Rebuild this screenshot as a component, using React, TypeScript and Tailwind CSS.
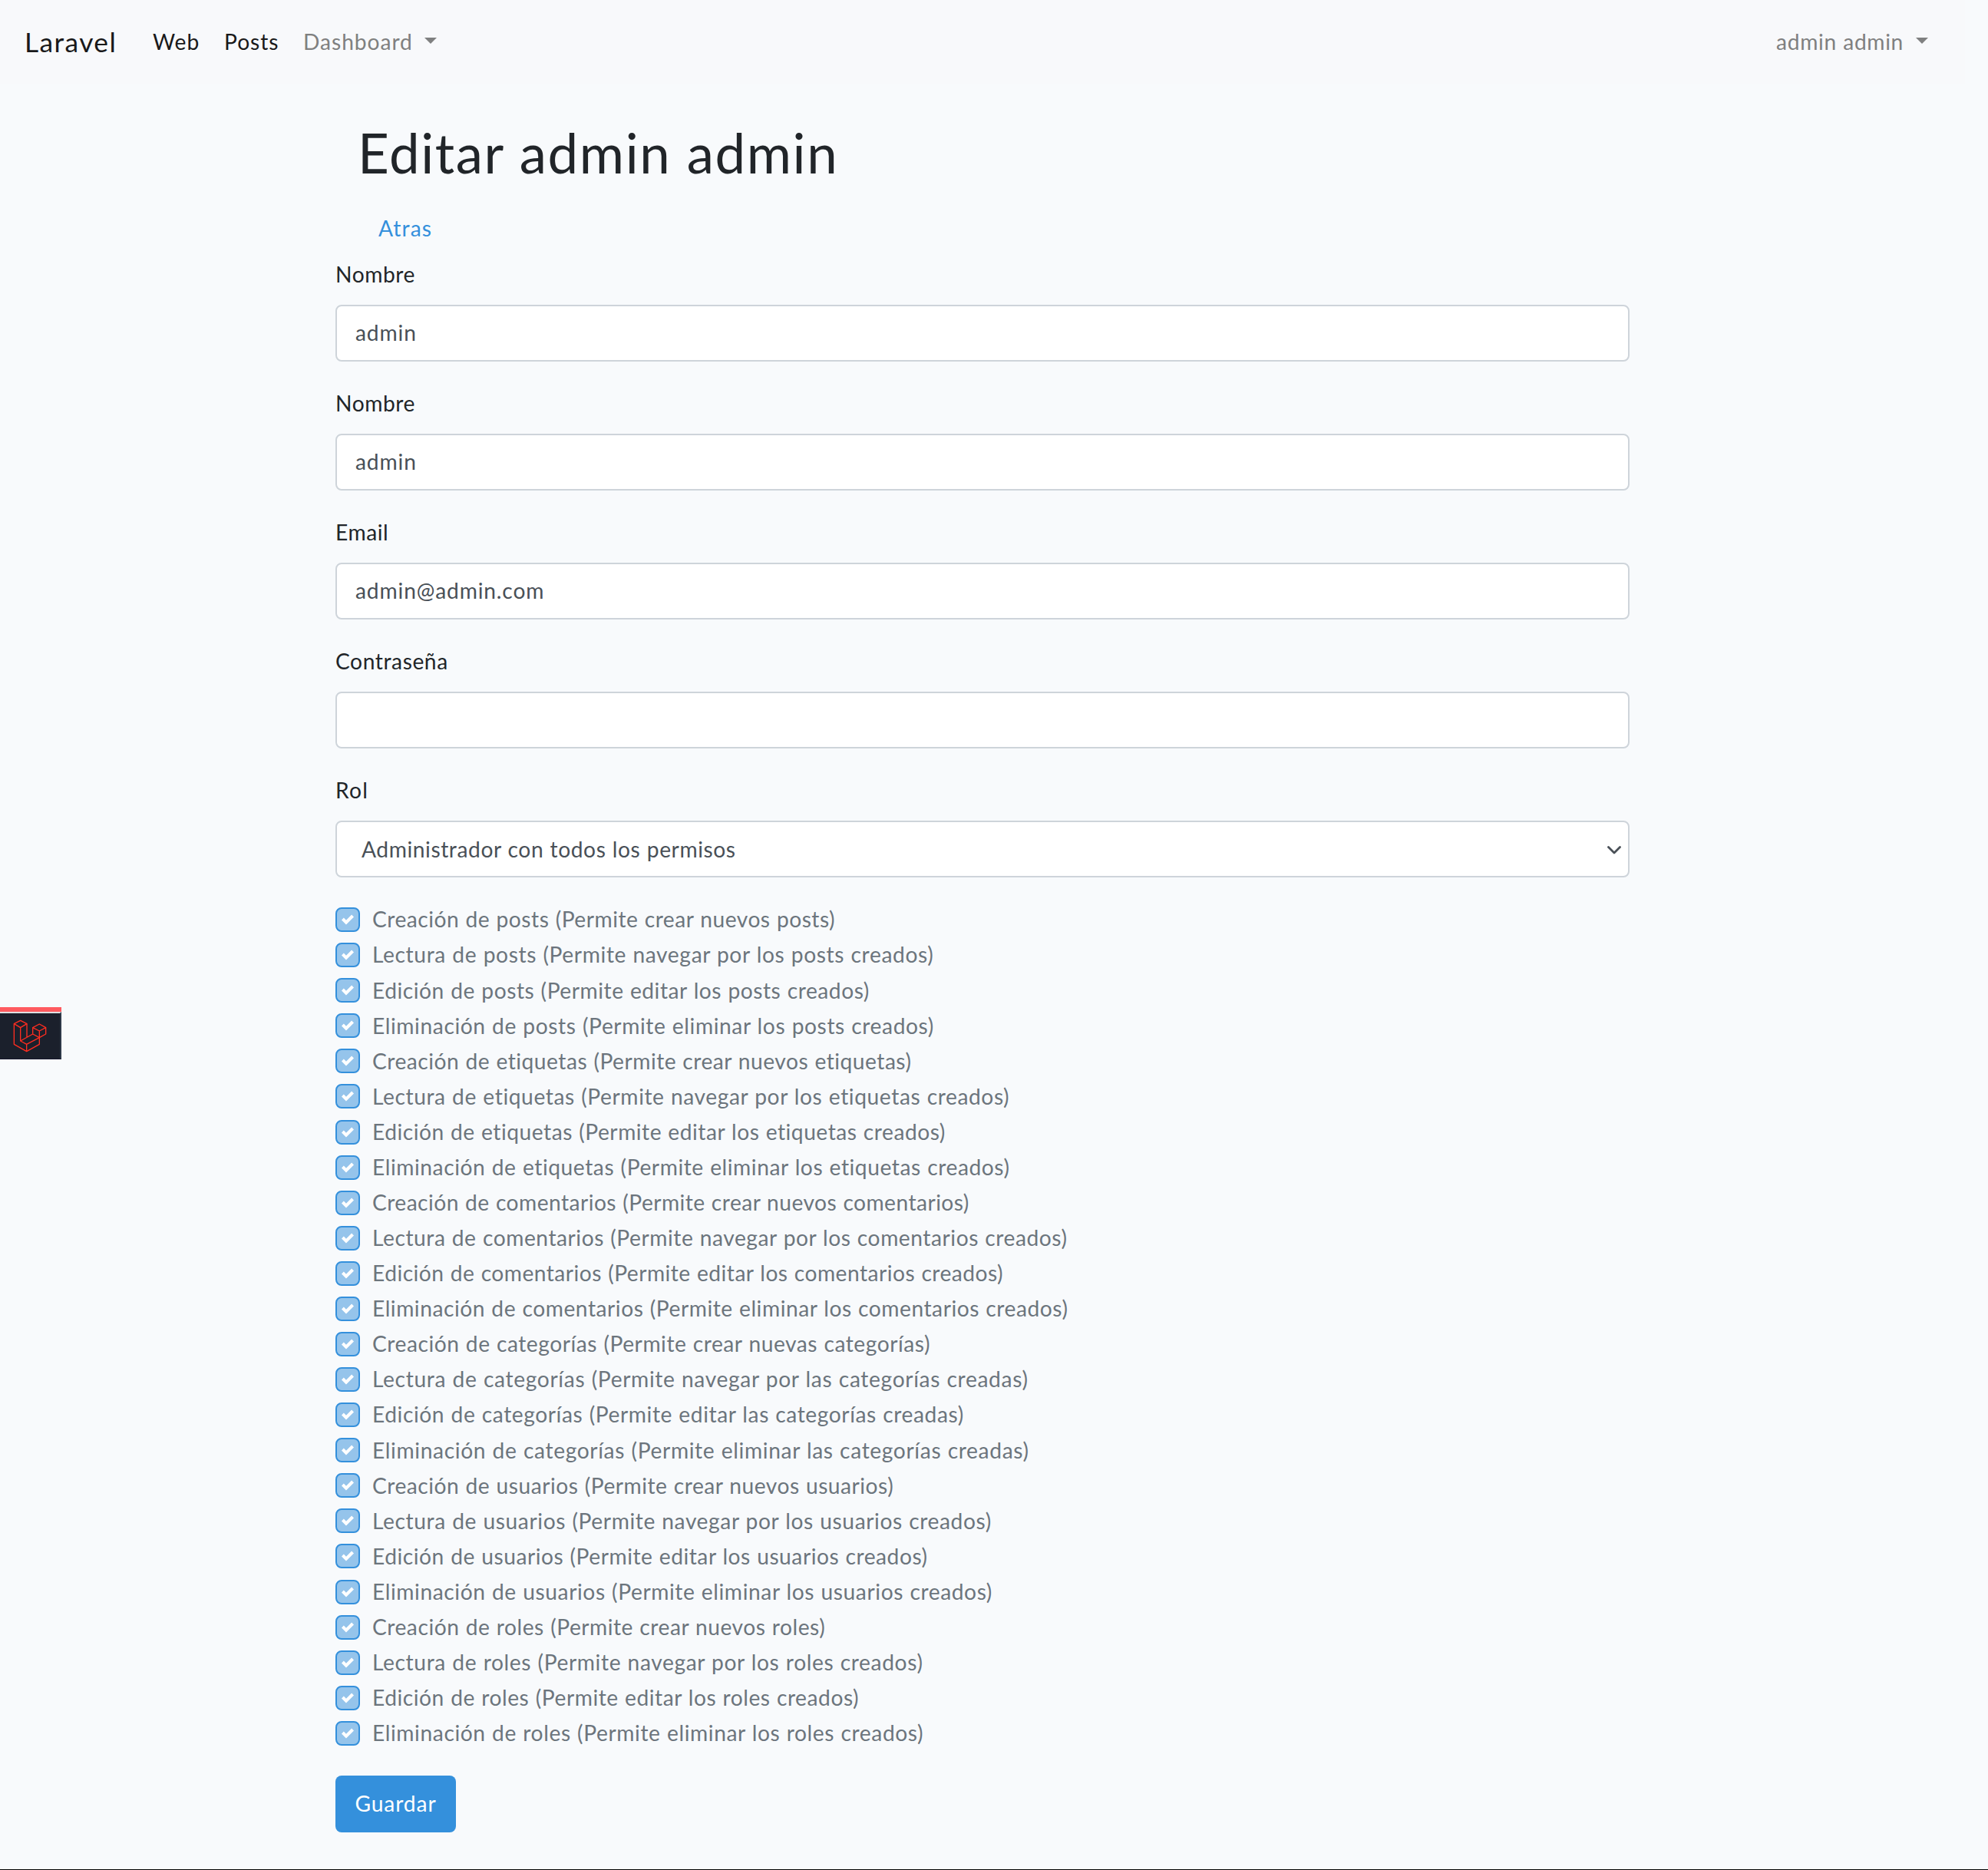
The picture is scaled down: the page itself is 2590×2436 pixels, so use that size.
import React from 'react';

const permissions: { text: string; tracking: string }[] = [
  { text: 'Creación de posts (Permite crear nuevos posts)', tracking: 'tracking-[0.5px]' },
  { text: 'Lectura de posts (Permite navegar por los posts creados)', tracking: 'tracking-[0.61px]' },
  { text: 'Edición de posts (Permite editar los posts creados)', tracking: 'tracking-[0.53px]' },
  { text: 'Eliminación de posts (Permite eliminar los posts creados)', tracking: 'tracking-[0.59px]' },
  { text: 'Creación de etiquetas (Permite crear nuevos etiquetas)', tracking: 'tracking-[0.49px]' },
  { text: 'Lectura de etiquetas (Permite navegar por los etiquetas creados)', tracking: 'tracking-[0.58px]' },
  { text: 'Edición de etiquetas (Permite editar los etiquetas creados)', tracking: 'tracking-[0.51px]' },
  { text: 'Eliminación de etiquetas (Permite eliminar los etiquetas creados)', tracking: 'tracking-[0.56px]' },
  { text: 'Creación de comentarios (Permite crear nuevos comentarios)', tracking: 'tracking-[0.45px]' },
  { text: 'Lectura de comentarios (Permite navegar por los comentarios creados)', tracking: 'tracking-[0.54px]' },
  { text: 'Edición de comentarios (Permite editar los comentarios creados)', tracking: 'tracking-[0.47px]' },
  { text: 'Eliminación de comentarios (Permite eliminar los comentarios creados)', tracking: 'tracking-[0.53px]' },
  { text: 'Creación de categorías (Permite crear nuevas categorías)', tracking: 'tracking-[0.53px]' },
  { text: 'Lectura de categorías (Permite navegar por las categorías creadas)', tracking: 'tracking-[0.64px]' },
  { text: 'Edición de categorías (Permite editar las categorías creadas)', tracking: 'tracking-[0.57px]' },
  { text: 'Eliminación de categorías (Permite eliminar las categorías creadas)', tracking: 'tracking-[0.63px]' },
  { text: 'Creación de usuarios (Permite crear nuevos usuarios)', tracking: 'tracking-[0.5px]' },
  { text: 'Lectura de usuarios (Permite navegar por los usuarios creados)', tracking: 'tracking-[0.59px]' },
  { text: 'Edición de usuarios (Permite editar los usuarios creados)', tracking: 'tracking-[0.52px]' },
  { text: 'Eliminación de usuarios (Permite eliminar los usuarios creados)', tracking: 'tracking-[0.58px]' },
  { text: 'Creación de roles (Permite crear nuevos roles)', tracking: 'tracking-[0.52px]' },
  { text: 'Lectura de roles (Permite navegar por los roles creados)', tracking: 'tracking-[0.61px]' },
  { text: 'Edición de roles (Permite editar los roles creados)', tracking: 'tracking-[0.53px]' },
  { text: 'Eliminación de roles (Permite eliminar los roles creados)', tracking: 'tracking-[0.59px]' },
];

function Caret() {
  return (
    <svg className="mb-[2px] h-2 w-4" viewBox="0 0 16 8" fill="#7f8080">
      <path d="M0 0h16L8 8z" />
    </svg>
  );
}

function Field({ label, value }: { label: string; value: string }) {
  return (
    <div className="mb-8">
      <label className="block h-[62px] leading-[45px]">{label}</label>
      <div className="flex h-[74px] items-center rounded-lg border-2 border-[#ced4da] bg-white px-6 pb-px tracking-[0.85px] text-[#495057]">
        {value}
      </div>
    </div>
  );
}

function Checkbox() {
  return (
    <span className="flex size-8 shrink-0 items-center justify-center rounded-lg border-2 border-[#3490dc] bg-[#95c4eb]">
      <svg className="size-4" viewBox="0 0 8 8" fill="#fff">
        <path d="M6.564.75l-3.59 3.612-1.538-1.55L0 4.26l2.974 2.99L8 2.193z" />
      </svg>
    </span>
  );
}

function DebugBadge() {
  return (
    <div className="absolute top-[1312px] left-0 w-20 border-t-[6px] border-[#ff5a5f]">
      <div className="h-[62px] border-t-2 border-r-2 border-b border-t-[#dfe0e2] border-r-[#2d3748] border-b-[#14142b] bg-[#1b202c]">
        <svg
          className="h-[60px] w-[78px]"
          viewBox="0 0 234 180"
          fill="none"
          stroke="#ff2d20"
          strokeWidth="4"
          strokeLinejoin="round"
        >
          <path d="M55 41L80 28L105 41L80 56Z" />
          <path d="M55 41V121L104 149L154 121V95L179 81V56L154 42L128 56V81L154 95" />
          <path d="M128 56L154 69L179 56M154 69V95L104 121V149M104 121L80 108V56M80 108L128 81M105 41V94" />
        </svg>
      </div>
    </div>
  );
}

export default function App() {
  return (
    <div className="relative flex h-[2436px] w-full flex-col overflow-hidden border-b border-black bg-[#f8fafc] font-['Lato',sans-serif] text-[28.2px] tracking-[0.57px] text-[#212529] [word-spacing:0.6px]">
      <nav className="flex h-[109px] w-[2560px] items-center bg-[#f8f9fb] pr-12 pl-8 tracking-[0.95px]">
        <a className="w-[167px] text-[35.4px] tracking-[1.4px] text-[#19191a]">Laravel</a>
        <a className="w-[93px] text-[#19191a]">Web</a>
        <a className="w-[103px] text-[#19191a]">Posts</a>
        <a className="flex items-center gap-[15px] text-[#7f8080]">
          Dashboard
          <Caret />
        </a>
        <a className="ml-auto flex items-center gap-4 tracking-[0.65px] text-[#7f8080]">
          admin admin
          <Caret />
        </a>
      </nav>

      <main className="mx-[437px] w-[1686px]">
        <h1 className="mt-[47px] pl-[29px] text-[70.8px] leading-[86px] tracking-[1.6px]">Editar admin admin</h1>
        <a className="mt-[34px] block pl-14 leading-[43px] tracking-[1.1px] text-[#3490dc]">Atras</a>
        <form className="mt-[16px]">
          <Field label="Nombre" value="admin" />
          <Field label="Nombre" value="admin" />
          <Field label="Email" value="admin@admin.com" />
          <Field label="Contraseña" value="" />
          <div className="mb-8">
            <label className="block h-[62px] leading-[45px] tracking-[1.2px]">Rol</label>
            <div className="flex h-[74px] items-center justify-between rounded-lg border-2 border-[#ced4da] bg-white pr-[9px] pl-8 text-[#495057]">
              <span>Administrador con todos los permisos</span>
              <svg className="mt-[3px] h-3 w-[18px]" viewBox="0 0 18 12" fill="none" stroke="#495057" strokeWidth="2.8">
                <path d="M1.5 1.5L9 9L16.5 1.5" strokeLinecap="round" strokeLinejoin="round" />
              </svg>
            </div>
          </div>

          {permissions.map(({ text, tracking }) => (
            <label key={text} className="flex h-[46.08px] items-center gap-4 text-[#6c757d]">
              <Checkbox />
              <span className={`pb-px whitespace-nowrap ${tracking}`}>{text}</span>
            </label>
          ))}

          <button
            type="button"
            className="mt-8 flex h-[74px] w-[157px] items-center justify-center rounded-lg bg-[#3490dc] pb-px tracking-[0.9px] text-white"
          >
            Guardar
          </button>
        </form>
      </main>

      <DebugBadge />
    </div>
  );
}
